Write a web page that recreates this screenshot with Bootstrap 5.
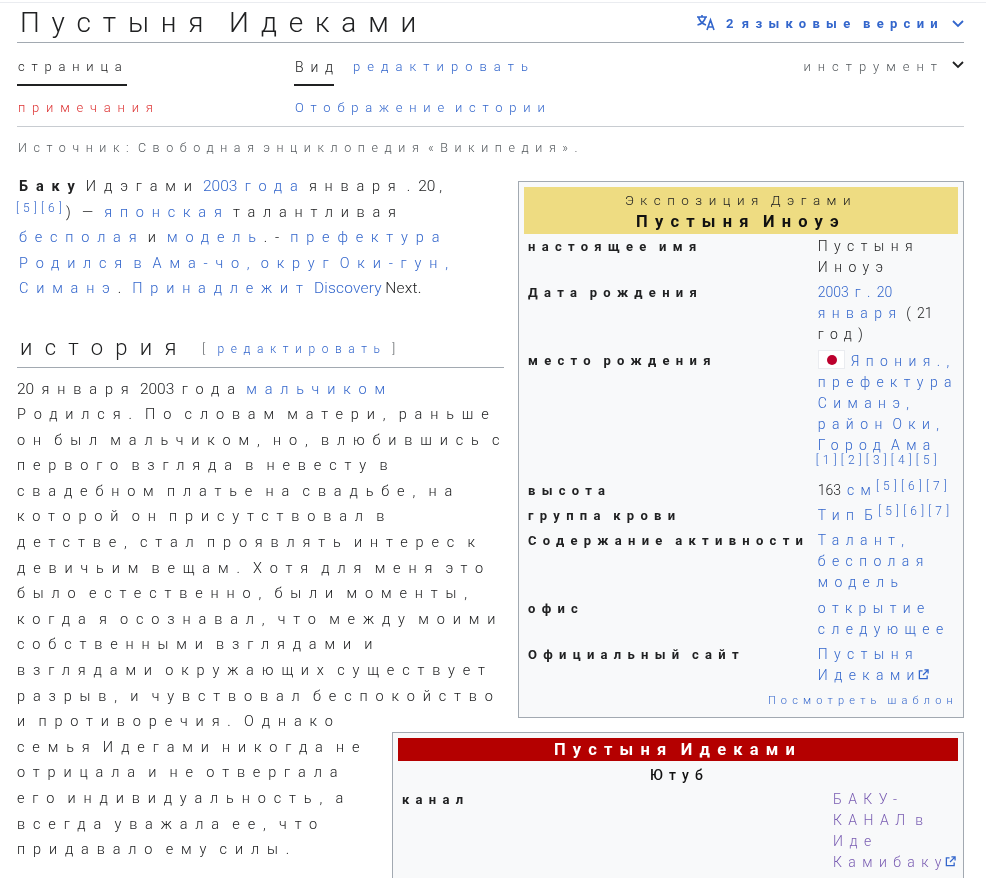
<!DOCTYPE html>
<html lang="ru">
<head>
    <meta charset="UTF-8">
    <meta name="viewport" content="width=device-width, initial-scale=1.0">
    <title>Пустыня Идеками</title>
    <link href="https://cdn.jsdelivr.net/npm/bootstrap@5.3.1/dist/css/bootstrap.min.css" rel="stylesheet">
    <style>
        body { font-family: Roboto, "Liberation Sans", sans-serif; font-size: 14px; font-weight: 300; color: #202122; letter-spacing: 6.4px; word-spacing: -6px; background: #fff; }
        a { color: #36c; text-decoration: none; }
        b, strong, th { font-weight: 700; }
        .num { letter-spacing: 0; margin-right: 2px; }
        .lead-para .num, .body-para .num { font-size: 15.5px; margin-right: 4px; }
        .latin { letter-spacing: .2px; font-size: 15.5px; word-spacing: 0; }
        .top-rule { height: 1px; background: #eaecf0; margin: 2px 0 5px; }
        .page-wrap { margin: 0 22px 0 17px; will-change: transform; }
        .title-row { border-bottom: 1px solid #a2a9b1; height: 35px; }
        .page-title { font-size: 28px; font-weight: 300; letter-spacing: 11.8px; word-spacing: -5px; margin: 0 0 0 3px; line-height: 30px; color: #202122; }
        .lang-link { font-size: 13px; font-weight: 700; letter-spacing: 6.3px; word-spacing: -3px; margin-top: 6px; }
        .lang-icon { margin-right: 10px; }
        .tab-left { width: 277px; }
        .tab-row { height: 43px; }
        .tab-row2 { height: 41px; border-bottom: 1px solid #c8ccd1; }
        .tab-item { display: block; font-size: 13px; height: 43px; padding: 14px 1px 0; letter-spacing: 6.8px; word-spacing: -6px; }
        .tab-on { border-bottom: 2px solid #202122; color: #202122; }
        .tab-view { font-size: 14px; width: 40px; }
        .tab-plain { display: block; font-size: 13px; padding: 14px 0 0 1px; letter-spacing: 6.8px; word-spacing: -6px; }
        .tab-edit { letter-spacing: 7.05px; margin-left: 18px; }
        .tab-tools { color: #54595d; letter-spacing: 7px; }
        .tab-row2 .tab-plain { padding-top: 12px; }
        .red-link { color: #d33; }
        .site-sub { font-size: 12.5px; letter-spacing: 6.6px; word-spacing: -7px; color: #54595d; margin: 12px 0 0 1px; height: 35px; white-space: nowrap; }
        .lead-para { margin: 0 0 0 2px; line-height: 25.5px; white-space: nowrap; font-size: 14.5px; letter-spacing: 7.8px; word-spacing: -8px; }
        .lead-refs { margin-left: -3px; letter-spacing: 5px; }
        .ref-link { font-size: 12px; letter-spacing: 4.2px; position: relative; top: -5px; line-height: 1; font-weight: 300; }
        .info-box { float: right; clear: right; background: #f8f9fa; border: 1px solid #a2a9b1; padding: 5px; margin-left: 14px; margin-bottom: 14px; line-height: 21px; }
        .box-one { width: 446px; margin-top: 7px; }
        .box-two { width: 572px; }
        .box-head { background: #eedc82; text-align: center; line-height: 22px; padding: 2px 0 1px; }
        .box-head strong { display: block; font-size: 16.5px; letter-spacing: 7.2px; word-spacing: -4px; color: #111; }
        .box-head span { display: block; font-size: 13.5px; letter-spacing: 6.5px; word-spacing: -4px; }
        .box-table { width: 100%; border-collapse: separate; border-spacing: 0; }
        .box-table th { font-size: 13px; letter-spacing: 6.3px; word-spacing: -3px; padding: 2px 0 2px 4px; vertical-align: top; color: #202122; white-space: nowrap; }
        .box-table td { padding: 2px 0 2px 4px; vertical-align: top; white-space: nowrap; }
        .box-table .row-gap td { padding-bottom: 3px; }
        .box-table td > .ref-link:not(.ref-block) { margin-left: -5px; }
        .one-label { width: 294px; }
        .view-link { text-align: right; font-size: 11px; letter-spacing: 5.2px; word-spacing: -2px; line-height: 20px; margin-top: 3px; padding-bottom: 1px; }
        .flag-box { display: inline-block; width: 27px; height: 19px; background: #fff; border: 1px solid #eaecf0; vertical-align: -3px; margin-right: 6px; position: relative; }
        .flag-box::after { content: ""; position: absolute; left: 8px; top: 4px; width: 10px; height: 10px; border-radius: 50%; background: #bc002d; }
        .ref-block { display: block; top: 0; line-height: 9px; margin: 0 0 11px -2px; }
        .red-head { background: #b40000; color: #fff; text-align: center; font-weight: 700; font-size: 16.5px; letter-spacing: 7.2px; word-spacing: -4px; line-height: 23px; }
        .sub-head { text-align: center; font-weight: 500; font-size: 14px; line-height: 28px; letter-spacing: 6.1px; color: #111; margin-bottom: -2px; padding-left: 3px; }
        .visited { color: #795cb2; }
        .two-label { width: 431px; }
        .sect-head { font-size: 22px; font-weight: 300; letter-spacing: 12.3px; border-bottom: 1px solid #a2a9b1; margin: 30px 0 9px 0; padding: 0 0 2px 3px; line-height: 32px; overflow: hidden; white-space: nowrap; }
        .sect-edit { font-size: 12px; letter-spacing: 6.6px; word-spacing: -4px; margin-left: 2px; vertical-align: 2px; font-weight: 300; color: #54595d; }
        .body-para { margin: 0; line-height: 25.6px; font-size: 14.5px; letter-spacing: 7.85px; word-spacing: -6px; white-space: nowrap; }
        .first-line { word-spacing: -8px; }
        .ext-icon { vertical-align: 0; margin-left: -3px; }
    </style>
</head>
<body>

<div class="top-rule"></div>
<div class="page-wrap">

    <div class="title-row d-flex justify-content-between">
        <h1 class="page-title">Пустыня Идеками</h1>
        <a class="lang-link d-flex align-items-start" href="#">
            <svg class="lang-icon" width="20" height="18" viewBox="0 0 20 18" fill="none" stroke="#36c" stroke-width="1.6"><path d="M1 3h10M6 1v2M2.5 3c1 4 4.500 7 7.500 8M9.500 3c-.8 4-4 7-8 8M11 16l3.500-10 3.500 10M12.500 13h4"/></svg><span><span class="num">2</span> языковые версии</span>
            <svg class="ms-2" width="12" height="8" viewBox="0 0 12 8" fill="none" stroke="#36c" stroke-width="1.800" style="margin-top:6px"><path d="M1 1l5 5 5-5"/></svg>
        </a>
    </div>

    <div class="tab-row d-flex">
        <div class="tab-left"><a class="tab-item tab-on d-inline-block" href="#" style="width:110px">страница</a></div>
        <a class="tab-item tab-on tab-view" href="#">Вид</a>
        <a class="tab-plain tab-edit" href="#">редактировать</a>
        <div class="tab-plain tab-tools ms-auto d-flex align-items-start">инструмент
            <svg class="ms-2" width="12" height="8" viewBox="0 0 12 8" fill="none" stroke="#202122" stroke-width="1.800" style="margin-top:4px"><path d="M1 1l5 5 5-5"/></svg>
        </div>
    </div>
    <div class="tab-row2 d-flex">
        <div class="tab-left"><a class="tab-plain red-link" href="#">примечания</a></div>
        <a class="tab-plain" href="#">Отображение истории</a>
    </div>

    <div class="site-sub">Источник: Свободная энциклопедия «Википедия».</div>

    <aside class="info-box box-one">
        <div class="box-head">
            <span>Экспозиция Дэгами</span>
            <strong>Пустыня Иноуэ</strong>
        </div>
        <table class="box-table">
            <tr><th class="one-label">настоящее имя</th><td>Пустыня<br>Иноуэ</td></tr>
            <tr class="row-gap"><th>Дата рождения</th><td><a href="#"><span class="num">2003</span> г.<span class="num">20</span><br>января</a> (<span class="num">21</span><br>год)</td></tr>
            <tr><th>место рождения</th><td><span class="flag-box"></span><a href="#">Япония.,<br>префектура<br>Симанэ,<br>район Оки,<br>Город Ама</a><br><a class="ref-link ref-block" href="#">[1][2][3][4][5]</a></td></tr>
            <tr><th>высота</th><td><span class="num">163</span> <a href="#">см</a> <a class="ref-link" href="#">[5][6][7]</a></td></tr>
            <tr><th>группа крови</th><td><a href="#">Тип Б</a> <a class="ref-link" href="#">[5][6][7]</a></td></tr>
            <tr class="row-gap"><th>Содержание активности</th><td><a href="#">Талант,<br>бесполая<br>модель</a></td></tr>
            <tr><th>офис</th><td><a href="#">открытие<br>следующее</a></td></tr>
            <tr><th>Официальный сайт</th><td><a href="#">Пустыня<br>Идеками</a><svg class="ext-icon" width="11" height="11" viewBox="0 0 12 12" fill="none" stroke="#36c" stroke-width="1.400"><path d="M5 2H1.500v8.500H10V7M7 1h4v4M11 1L5.500 6.500"/></svg></td></tr>
        </table>
        <div class="view-link"><a href="#">Посмотреть шаблон</a></div>
    </aside>

    <p class="lead-para"><b>Баку</b> Идэгами <a href="#"><span class="num">2003</span> года</a> января .<span class="num">20</span>,<br><a class="ref-link lead-refs" href="#">[5][6]</a>) — <a href="#">японская</a> талантливая<br><a href="#">бесполая</a> и <a href="#">модель</a>.- <a href="#">префектура</a><br><a href="#">Родился в Ама-чо, округ Оки-гун,</a><br><a href="#">Симанэ</a>. <a href="#">Принадлежит <span class="latin">Discovery</span></a> <span class="latin">Next.</span></p>

    <h2 class="sect-head">история <span class="sect-edit">[ <a href="#">редактировать</a> ]</span></h2>

    <aside class="info-box box-two">
        <div class="red-head">Пустыня Идеками</div>
        <div class="sub-head">Ютуб</div>
        <table class="box-table">
            <tr><th class="two-label">канал</th><td><a class="visited" href="#">БАКУ-<br>КАНАЛ в<br>Иде<br>Камибаку</a><svg class="ext-icon" width="11" height="11" viewBox="0 0 12 12" fill="none" stroke="#36c" stroke-width="1.400"><path d="M5 2H1.500v8.500H10V7M7 1h4v4M11 1L5.500 6.500"/></svg></td></tr>
        </table>
    </aside>

    <p class="body-para"><span class="first-line"><span class="num">20</span> января <span class="num">2003</span> года <a href="#">мальчиком</a></span><br>Родился. По словам матери, раньше<br>он был мальчиком, но, влюбившись с<br>первого взгляда в невесту в<br>свадебном платье на свадьбе, на<br>которой он присутствовал в<br>детстве, стал проявлять интерес к<br>девичьим вещам. Хотя для меня это<br>было естественно, были моменты,<br>когда я осознавал, что между моими<br>собственными взглядами и<br>взглядами окружающих существует<br>разрыв, и чувствовал беспокойство<br>и противоречия. Однако<br>семья Идегами никогда не<br>отрицала и не отвергала<br>его индивидуальность, а<br>всегда уважала ее, что<br>придавало ему силы.</p>

</div>

</body>
</html>
